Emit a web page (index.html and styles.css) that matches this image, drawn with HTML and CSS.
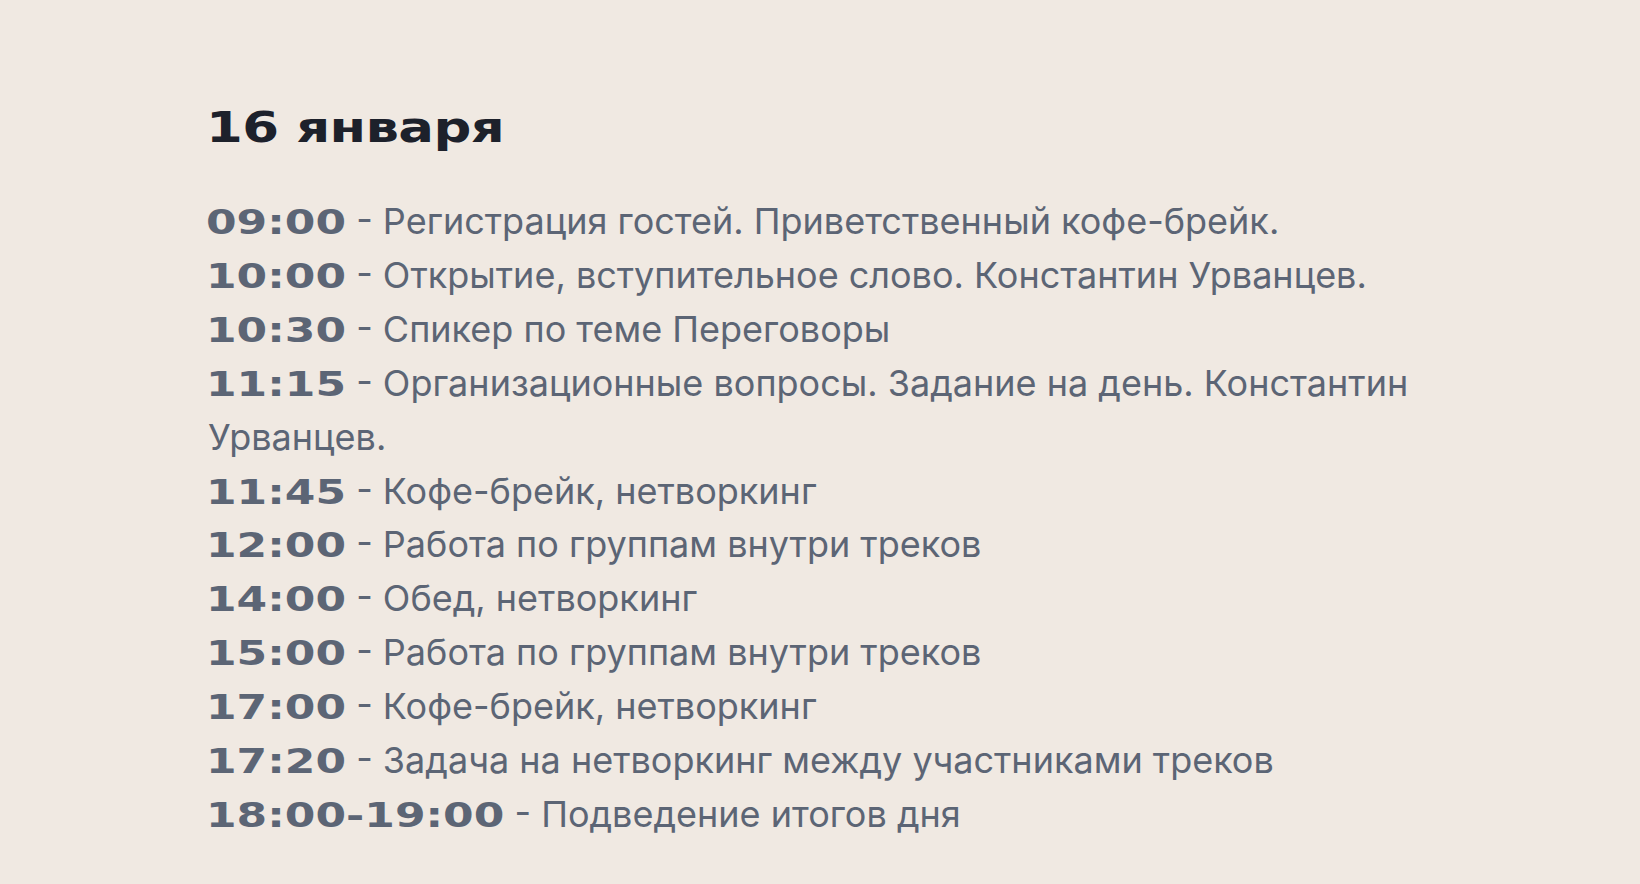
FILE: index.html
```html
<!DOCTYPE html>
<html lang="ru">
<head>
<meta charset="utf-8">
<link rel="stylesheet" href="styles.css">
</head>
<body>
<main class="page">
  <h2 class="day-title">16 января</h2>
  <div class="schedule">
    <p class="item"><span class="time">09:00</span> - Регистрация гостей. Приветственный кофе-брейк.</p>
    <p class="item"><span class="time">10:00</span> - Открытие, вступительное слово. Константин Урванцев.</p>
    <p class="item"><span class="time">10:30</span> - Спикер по теме Переговоры</p>
    <p class="item"><span class="time">11:15</span> - Организационные вопросы. Задание на день. Константин Урванцев.</p>
    <p class="item"><span class="time">11:45</span> - Кофе-брейк, нетворкинг</p>
    <p class="item"><span class="time">12:00</span> - Работа по группам внутри треков</p>
    <p class="item"><span class="time">14:00</span> - Обед, нетворкинг</p>
    <p class="item"><span class="time">15:00</span> - Работа по группам внутри треков</p>
    <p class="item"><span class="time">17:00</span> - Кофе-брейк, нетворкинг</p>
    <p class="item"><span class="time">17:20</span> - Задача на нетворкинг между участниками треков</p>
    <p class="item"><span class="time time--range">18:00-19:00</span> - Подведение итогов дня</p>
  </div>
</main>
</body>
</html>
```

FILE: styles.css
```css
html, body {
  margin: 0;
  padding: 0;
  background: #f0e9e2;
}
body {
  width: 1640px;
  height: 884px;
  overflow: hidden;
}
.page {
  width: 1224px;
  margin: 0 auto;
  padding-top: 99px;
}
.day-title {
  margin: 0 0 38px -2px;
  font-family: "DejaVu Sans", sans-serif;
  font-weight: 700;
  font-size: 42px;
  line-height: 58px;
  color: #1d212b;
  transform: scaleX(1.26);
  transform-origin: left center;
  width: max-content;
  letter-spacing: -0.5px;
}
.schedule {
  font-family: Inter, "Noto Sans", sans-serif;
  font-size: 36px;
  line-height: 53.9px;
  color: #5c6575;
}
.item {
  margin: 0;
}
.time {
  display: inline-block;
  margin-left: -2px;
  font-family: "DejaVu Sans", sans-serif;
  font-weight: 700;
  font-size: 33.6px;
  line-height: 1;
  color: #5c6575;
  transform: scaleX(1.31);
  transform-origin: left center;
  margin-right: calc(3.184em * 0.31);
}
.time--range {
  margin-right: calc(6.783em * 0.31);
}
```
